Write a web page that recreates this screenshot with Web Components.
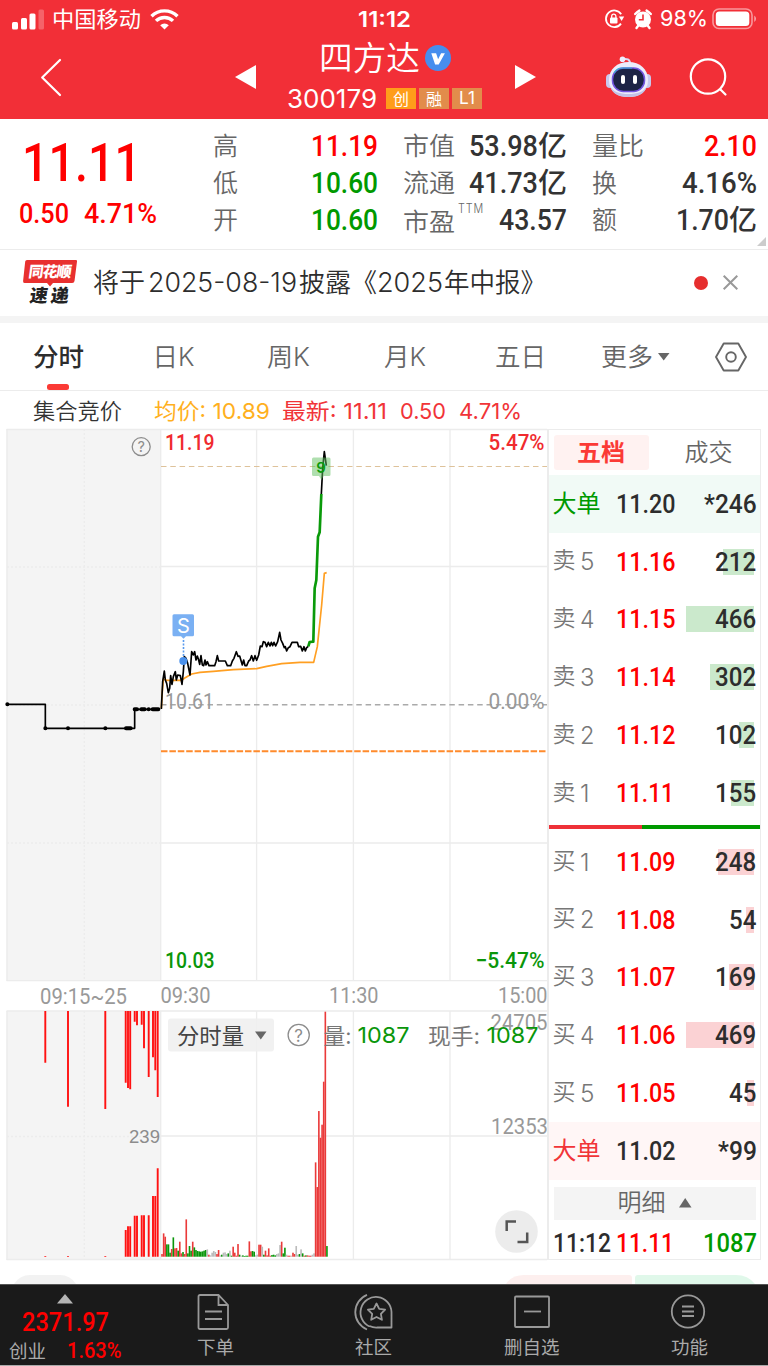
<!DOCTYPE html>
<html lang="zh-CN">
<head>
<meta charset="utf-8">
<title>四方达 300179</title>
<style>
  * {
    margin: 0;
    padding: 0;
    box-sizing: border-box;
  }
  body {
    width: 768px;
    height: 1366px;
    overflow: hidden;
    background: #fff;
    color: #333;
    font-family: Inter, "Noto Sans CJK SC", sans-serif;
  }
</style>
</head>
<body>
<stock-app></stock-app>

<script>
// reset shared by every shadow root
const base = `
      :host, * {
        box-sizing: border-box;
      }
      svg {
        overflow: visible;
      }`;

// Text squeezed or stretched to a given width: <fit-text w="60" size="24">
class FitText extends HTMLElement {
  constructor() {
    super();
    this.attachShadow({ mode: "open" });
  }

  connectedCallback() {
    const w = parseFloat(this.getAttribute("w"));
    const size = parseFloat(this.getAttribute("size"));
    this.shadowRoot.innerHTML = `
    <style>
      :host {
        display: block;
        flex: none;
        width: ${w}px;
        height: ${size}px;
        font-size: ${size}px;
        line-height: ${size}px;
        white-space: nowrap;
      }
      :host([num]) {
        font-family: Roboto, "Noto Sans CJK SC", sans-serif;
        font-weight: 500;
      }
      span {
        display: inline-block;
        transform-origin: 0 50%;
      }
    </style>
    <span><slot></slot></span>`;
    const span = this.shadowRoot.querySelector("span");
    const natural = span.getBoundingClientRect().width;
    if (natural) span.style.transform = `scaleX(${w / natural})`;
  }
}
customElements.define("fit-text", FitText);

class StatusBar extends HTMLElement {
  constructor() {
    super();
    this.attachShadow({ mode: "open" }).innerHTML = `
    <style>${base}
      :host {
        display: grid;
        grid-template-columns: 1fr auto 1fr;
        align-items: center;
        height: 38px;
        padding: 0 11px 0 12px;
        color: #fff;
      }
      .side { display: flex; align-items: center; }
      .end { justify-content: flex-end; }
      svg { display: block; flex: none; }
    </style>
    <div class="side">
      <svg width="32" height="21" viewBox="0 0 32 21" fill="#fff">
        <rect x="0" y="13" width="6" height="7.5" rx="1.5"/>
        <rect x="9" y="9" width="6" height="11.500" rx="1.5"/>
        <rect x="17.500" y="4.500" width="6" height="16" rx="1.5"/>
        <rect x="26.500" y="0.500" width="5.500" height="20" rx="1.5" opacity=".25"/>
      </svg>
      <fit-text w="89" size="22" style="margin-left:8px">中国移动</fit-text>
      <svg width="29" height="22" viewBox="0 0 29 22" fill="none" stroke="#fff" stroke-width="3.400" style="margin-left:8.500px">
        <path d="M1.500 8.200a18.500 18.500 0 0 1 26 0"/>
        <path d="M6 12.900a12.200 12.200 0 0 1 17 0"/>
        <path d="M10.200 17.200a6.200 6.200 0 0 1 8.600 0L14.500 21.500z" fill="#fff" stroke="none"/>
      </svg>
    </div>
    <fit-text w="53" size="21" style="font-weight:600">11:12</fit-text>
    <div class="side end">
      <svg width="21" height="20" viewBox="0 0 21 20" fill="none" stroke="#fff" stroke-width="1.800">
        <path d="M17.200 5.200A8.300 8.300 0 1 0 17 14.600"/>
        <path d="M14.800 7.500h5.400L17.600 12z" fill="#fff" stroke="none"/>
        <rect x="6" y="8.500" width="7.500" height="6" rx="1" fill="#fff" stroke="none"/>
        <path d="M7.700 9V7.200a2.100 2.100 0 0 1 4.200 0V9" stroke-width="1.300"/>
      </svg>
      <svg width="18" height="20" viewBox="0 0 18 20" style="margin-left:9px">
        <circle cx="9" cy="10.500" r="8" fill="#fff"/>
        <path d="M1.200 5a16 16 0 0 1 4.200-3.400M16.800 5a16 16 0 0 0-4.200-3.400M4 17l-1.500 2M14 17l1.500 2" stroke="#fff" stroke-width="2.400" stroke-linecap="round"/>
        <path d="M9 5.500v5.300H4.800" fill="none" stroke="#f22f37" stroke-width="1.600"/>
      </svg>
      <fit-text w="48" size="21.500" style="margin:0 4px 0 8.500px">98%</fit-text>
      <svg width="45" height="22" viewBox="0 0 45 22">
        <rect x="1" y="1" width="39" height="19.500" rx="6" fill="none" stroke="#fff" stroke-opacity=".5" stroke-width="1.600"/>
        <rect x="3.800" y="3.600" width="33.500" height="14.300" rx="3.500" fill="#fff"/>
        <path d="M42.300 7.500a4 4 0 0 1 0 6.500z" fill="#fff" fill-opacity=".6"/>
      </svg>
    </div>`;
  }
}
customElements.define("status-bar", StatusBar);

class StockHeader extends HTMLElement {
  constructor() {
    super();
    this.attachShadow({ mode: "open" }).innerHTML = `
    <style>${base}
      :host {
        display: block;
        height: 119px;
        background: #f22f37;
        color: #fff;
      }
      nav {
        display: grid;
        grid-template-columns: 235px 21px 259px 21px 70px 45px 39px 1fr;
        align-items: center;
        height: 81px;
      }
      svg { display: block; }
      .title {
        display: grid;
        grid-template-rows: 40px 41px;
        justify-items: center;
        padding-right: 2px;
      }
      .line { display: flex; align-items: center; }
      .tag {
        display: flex;
        align-items: center;
        justify-content: center;
        width: 30px;
        height: 21px;
        margin-left: 3.400px;
        background: #e28c4b;
      }
      .tag.gold { margin-left: 9px; background: #ff9d1a; }
      .up { margin-top: -4px; }
    </style>
    <status-bar></status-bar>
    <nav>
      <svg class="up" width="22" height="38" viewBox="0 0 22 38" style="margin-left:40px" fill="none" stroke="#fff" stroke-width="2.200" stroke-linecap="round" stroke-linejoin="round"><path d="M20 2 2.200 19.500 20 37"/></svg>
      <svg class="up" width="21" height="24" fill="#fff"><path d="M0 12 21 0v24z"/></svg>
      <div class="title">
        <div class="line">
          <fit-text w="101" size="33" style="font-weight:350">四方达</fit-text>
          <svg width="26" height="26" viewBox="0 0 26 26" style="margin-left:5px">
            <circle cx="13" cy="13" r="13" fill="#468eee"/>
            <path d="M6.300 8.200h4.800l2 6 3-6h3.800l-6.200 11.300h-3.600z" fill="#fff"/>
          </svg>
        </div>
        <div class="line">
          <fit-text w="90" size="25.500">300179</fit-text>
          <div class="tag gold"><fit-text w="16" size="16">创</fit-text></div>
          <div class="tag"><fit-text w="16" size="16">融</fit-text></div>
          <div class="tag"><fit-text w="16" size="17">L1</fit-text></div>
        </div>
      </div>
      <svg class="up" width="21" height="24" fill="#fff"><path d="M21 12 0 0v24z"/></svg>
      <i></i>
      <svg class="up" width="45" height="42" viewBox="0 0 45 42">
        <path d="M16 3.500c5-1.500 8 0 8 4" fill="none" stroke="#dcdcf6" stroke-width="2"/>
        <circle cx="16.500" cy="3.200" r="2.800" fill="#eef"/>
        <rect x="0" y="18" width="8" height="14" rx="4" fill="#c9c9ee"/>
        <rect x="37" y="18" width="8" height="14" rx="4" fill="#c9c9ee"/>
        <path d="M22.500 6C34 6 42 13 42 24S34 41 22.500 41 3 35 3 24 11 6 22.500 6z" fill="#ececfb"/>
        <path d="M22.500 38C31 38 38 36 41 30 39 38 32 41 22.500 41S6 38 4 30c3 6 10 8 18.500 8z" fill="#c3c3e6"/>
        <rect x="6.500" y="12" width="32" height="23.500" rx="11" fill="#1d2446" stroke="#7355e0" stroke-width="1.500"/>
        <path d="M8 17c2-4 5-5 9-5h9" fill="none" stroke="#37b6cf" stroke-width="1.200"/>
        <rect x="15" y="19" width="4" height="9" rx="2" fill="#fff"/>
        <rect x="27" y="19" width="4" height="9" rx="2" fill="#fff"/>
      </svg>
      <svg class="up" width="40" height="40" viewBox="0 0 40 40" style="margin-left:38.500px" fill="none" stroke="#fff" stroke-width="2.200" stroke-linecap="round"><circle cx="18" cy="19.500" r="17.200"/><path d="M30.500 32.500 35.500 37.500"/></svg>
    </nav>`;
  }
}
customElements.define("stock-header", StockHeader);

class StatItem extends HTMLElement {
  constructor() {
    super();
    this.attachShadow({ mode: "open" }).innerHTML = `
    <style>${base}
      :host {
        display: flex;
        align-items: center;
        justify-content: space-between;
        height: 37px;
        color: #333;
      }
      .label { display: flex; align-items: center; color: #666; font-weight: 350; }
      .value { display: flex; align-items: center; }
    </style>
    <div class="label"><slot name="label"></slot></div>
    <div class="value"><slot></slot></div>`;
  }
}
customElements.define("stat-item", StatItem);

class StockQuote extends HTMLElement {
  constructor() {
    super();
    this.attachShadow({ mode: "open" }).innerHTML = `
    <style>${base}
      :host {
        display: grid;
        grid-template-columns: 194px 544px 1fr;
        height: 131px;
        padding: 8.500px 0 0 19px;
        border-bottom: 1.500px solid #ececec;
      }
      .price { color: #f00; padding-top: 8.500px; }
      .change { display: flex; gap: 15px; margin-top: 10px; }
      .stats {
        display: grid;
        grid-template-columns: repeat(3, 164.500px);
        grid-template-rows: repeat(3, 37px);
        grid-auto-flow: column;
        column-gap: 25px;
      }
      .red { color: #f00; }
      .green { color: #090; }
      .yi { font-weight: 500; }
      svg { align-self: end; margin: 0 0 3px auto; padding-right: 4px; width: 13px; height: 9px; }
    </style>
    <div class="price">
      <fit-text num w="119" size="54" style="margin-left:3px">11.11</fit-text>
      <div class="change">
        <fit-text num w="50" size="28">0.50</fit-text>
        <fit-text num w="73" size="28">4.71%</fit-text>
      </div>
    </div>
    <div class="stats">
      <stat-item><fit-text slot="label" w="25" size="25">高</fit-text><fit-text num class="red" w="67" size="29">11.19</fit-text></stat-item>
      <stat-item><fit-text slot="label" w="25" size="25">低</fit-text><fit-text num class="green" w="67" size="29">10.60</fit-text></stat-item>
      <stat-item><fit-text slot="label" w="25" size="25">开</fit-text><fit-text num class="green" w="67" size="29">10.60</fit-text></stat-item>
      <stat-item><fit-text slot="label" w="52" size="25.500">市值</fit-text><fit-text num w="69" size="29">53.98</fit-text><fit-text class="yi" w="29" size="28">亿</fit-text></stat-item>
      <stat-item><fit-text slot="label" w="52" size="25.500">流通</fit-text><fit-text num w="69" size="29">41.73</fit-text><fit-text class="yi" w="29" size="28">亿</fit-text></stat-item>
      <stat-item><fit-text slot="label" w="52" size="25.500" style="margin-top:4px">市盈</fit-text><fit-text slot="label" w="26" size="12.500" style="margin:-21px 0 0 3.500px;letter-spacing:1px">TTM</fit-text><fit-text num w="68" size="29">43.57</fit-text></stat-item>
      <stat-item><fit-text slot="label" w="52" size="25.500">量比</fit-text><fit-text num class="red" w="53" size="29">2.10</fit-text></stat-item>
      <stat-item><fit-text slot="label" w="25" size="25">换</fit-text><fit-text num w="75" size="29">4.16%</fit-text></stat-item>
      <stat-item><fit-text slot="label" w="25" size="25">额</fit-text><fit-text num w="53" size="29">1.70</fit-text><fit-text class="yi" w="28" size="28">亿</fit-text></stat-item>
    </div>
    <svg viewBox="0 0 9 9" fill="#ccc"><path d="M9 0v9H0z"/></svg>`;
  }
}
customElements.define("stock-quote", StockQuote);

class NewsBanner extends HTMLElement {
  constructor() {
    super();
    this.attachShadow({ mode: "open" }).innerHTML = `
    <style>${base}
      :host {
        display: flex;
        align-items: center;
        height: 73px;
        padding: 0 30px 1px 23px;
        border-bottom: 7px solid #f4f4f4;
        color: #2d2d2d;
        font-weight: 350;
      }
      .logo { flex: none; margin-right: 15.500px; }
      .logo text { font-family: "Noto Sans CJK SC", sans-serif; font-weight: 900; }
      .right { display: flex; align-items: center; gap: 15px; margin-left: auto; }
      .dot { width: 14px; height: 14px; border-radius: 50%; background: #e62e2e; }
    </style>
    <svg class="logo" width="54" height="45" viewBox="0 0 54 45">
      <path d="M4 0h49q1.500 0 1 1.500L51.500 21q-.3 2-2.300 2H30l-3 3.500-3-3.500H1.500Q-.2 23 .1 21L2.200 1.500Q2.400 0 4 0z" fill="#e8302f"/>
      <g transform="skewX(-8)">
        <text x="7.500" y="17" font-size="15" fill="#fff" textLength="43">同花顺</text>
        <text x="12" y="42" font-size="18" fill="#222" textLength="39">速递</text>
      </g>
    </svg>
    <fit-text w="52" size="26">将于</fit-text>
    <fit-text w="149" size="26.500" style="margin:0 2px 0 3px">2025-08-19</fit-text>
    <fit-text w="78" size="26">披露《</fit-text>
    <fit-text w="66" size="26.500" style="margin-right:1px">2025</fit-text>
    <fit-text w="102" size="26">年中报》</fit-text>
    <div class="right">
      <div class="dot"></div>
      <svg width="15" height="15" viewBox="0 0 15 15" stroke="#999" stroke-width="2"><path d="M.7.7l13.600 13.600M14.300.7.7 14.300"/></svg>
    </div>`;
  }
}
customElements.define("news-banner", NewsBanner);

class ChartTabs extends HTMLElement {
  constructor() {
    super();
    this.attachShadow({ mode: "open" }).innerHTML = `
    <style>${base}
      :host {
        display: grid;
        grid-template-columns: 120px 114px 117.500px 111px 106px 113.500px 1fr;
        align-items: center;
        height: 68px;
        padding-left: 32.500px;
        border-bottom: 1px solid #ececec;
        color: #666;
        font-weight: 350;
      }
      .active {
        align-self: stretch;
        display: grid;
        grid-template-rows: 60px 6px;
        align-items: center;
        padding-top: 1px;
        color: #2d2d2d;
        font-weight: 500;
      }
      .active fit-text { margin-top: 6px; }
      .bar { width: 22px; height: 5.500px; margin-left: 14px; border-radius: 2.500px; background: #fb3a35; }
      .more { display: flex; align-items: center; gap: 5px; }
    </style>
    <div class="active"><fit-text w="51" size="25.500">分时</fit-text><div class="bar"></div></div>
    <fit-text w="42" size="25.500">日K</fit-text>
    <fit-text w="43" size="25.500">周K</fit-text>
    <fit-text w="42" size="25.500">月K</fit-text>
    <fit-text w="51" size="25.500">五日</fit-text>
    <div class="more"><fit-text w="52" size="25.500">更多</fit-text><svg width="12" height="8" fill="#666"><path d="M0 0h11.500L5.700 7.500z"/></svg></div>
    <svg width="32" height="30" viewBox="0 0 32 30" fill="none" stroke="#666" stroke-width="1.900" stroke-linejoin="round"><path d="M8.700 1.500h14.600L31 15l-7.700 13.500H8.700L1 15z"/><circle cx="16" cy="15" r="4.800"/></svg>`;
  }
}
customElements.define("chart-tabs", ChartTabs);

class ChartLegend extends HTMLElement {
  constructor() {
    super();
    this.attachShadow({ mode: "open" }).innerHTML = `
    <style>${base}
      :host {
        display: flex;
        align-items: center;
        height: 38px;
        padding: 1px 0 0 32.500px;
        color: #f13438;
      }
    </style>
    <fit-text w="89" size="22" style="color:#333;margin-right:32px;font-weight:350">集合竞价</fit-text>
    <fit-text w="116" size="22" style="color:#ffb01e;margin-right:12px">均价: 10.89</fit-text>
    <fit-text w="105" size="22" style="margin-right:13px">最新: 11.11</fit-text>
    <fit-text w="46" size="22" style="margin-right:13px">0.50</fit-text>
    <fit-text w="63" size="22">4.71%</fit-text>`;
  }
}
customElements.define("chart-legend", ChartLegend);

// call auction: [x, end of the upper bar, start of the lower bar]
const auction = [
  [45.3, 1062.700, 1256], [68, 1106.700, 1256], [105.3, 1109, 1256],
  [125.700, 1082.700, 1230], [128, 1088, 1226.300], [130.200, 1089.300, 1226.300],
  [134.700, 1021.700, 1215.700], [137, 1025.300, 1215.700], [141.700, 1024.700, 1215.300],
  [144, 1048.300, 1215.300], [148.700, 1077, 1215.300], [153, 1057.300, 1196],
  [155.300, 1070.300, 1196], [157.700, 1097, 1168.300]
];

// minute volumes: colour letter and height in thirds of a pixel
const volumes = (
  "r8 r70 r60 g37 g37 g12 r23 g58 r25 r26 g18 r45 r10 g14 r8 r112 g10 g32 g18 r45 " +
  "g28 g20 g17 g16 g15 g16 g18 g20 x22 r6 x4 x12 x17 x14 r8 r20 x4 g6 x12 x13 " +
  "x8 g10 x18 g3 r30 r12 r3 r38 g6 x3 g4 g2 g3 g3 r46 r16 g17 g15 x4 x6 " +
  "r36 r36 x30 g6 r18 r4 r25 r3 g5 g6 g4 x8 x10 x35 r45 g10 g27 x6 r3 r3 " +
  "x3 r12 r8 x32 x6 g8 x22 g10 r3 g4 r4 r3 r3 x6 x10 r283 r209 r437 r357 r396 " +
  "r525 r735 g32"
).split(" ");

class MinuteChart extends HTMLElement {
  constructor() {
    super();
    this.attachShadow({ mode: "open" });
    this.render();
  }

  auctionBars() {
    return auction.map(([x, top, low]) =>
      `<path d="M${x} 1011V${top}M${x} ${low}V1256.700"/>`).join("");
  }

  volumeBars() {
    const colors = { r: "#ea3a3a", g: "#0a960a", x: "#bbb" };
    return volumes.map((v, i) => {
      const h = parseInt(v.slice(1)) / 3;
      return `<rect x="${(161.200 + i * 1.617).toFixed(2)}" y="${(1256.700 - h).toFixed(2)}" width="1.620" height="${h.toFixed(2)}" fill="${colors[v[0]]}"/>`;
    }).join("");
  }

  label(x, y, w, text, color = "#999") {
    return `<text class="num" x="${x}" y="${y}" font-size="22" font-weight="${color === "#999" ? 400 : 500}" textLength="${w}" lengthAdjust="spacingAndGlyphs" fill="${color}">${text}</text>`;
  }

  word(x, y, w, text, color) {
    return `<text x="${x}" y="${y}" font-size="22" textLength="${w}" lengthAdjust="spacingAndGlyphs" fill="${color}">${text}</text>`;
  }

  render() {
    this.shadowRoot.innerHTML = `
    <style>${base}
      :host { display: block; width: 547px; height: 855px; }
      svg { display: block; font-family: Inter, "Noto Sans CJK SC", sans-serif; }
      .num { font-family: Roboto, sans-serif; }
    </style>
    <svg width="547" height="855" viewBox="0 429 547 855">
      <rect x="6.500" y="429" width="154" height="552" fill="#f4f4f4"/>
      <rect x="6.500" y="1011" width="154" height="248.500" fill="#f4f4f4"/>
      <g stroke="#ececec" stroke-width="1.300" fill="none">
        <path d="M6.500 429.500H547M6.500 980.700H547M6.500 1011H547M6.500 1259.500H547"/>
        <path d="M7 429V981M7 1011V1260M160.700 429V981M160.700 1011V1260M256.600 429V981M256.600 1011V1260M353.400 429V981M353.400 1011V1260M450 429V981M450 1011V1260"/>
        <path d="M161 566.500H547M161 843H547M161 1136H547"/>
        <path d="M84.300 429V981M84.300 1011V1260M7 567H160M7 705H160M7 843H160M7 1136.500H160" stroke-dasharray="2 2"/>
      </g>
      <path d="M161 466.500H547" stroke="#dec29a" stroke-width="1.200" stroke-dasharray="5.500 3.800"/>
      <path d="M161 704.700H547" stroke="#aaa" stroke-width="1.400" stroke-dasharray="5.500 3.800"/>
      <path d="M161 751.200H547" stroke="#ff8b2c" stroke-width="2" stroke-dasharray="6.500 1.900"/>

      ${this.label(165, 449.500, 49.500, "11.19", "#f02a2e")}
      ${this.label(488.500, 449.500, 56, "5.47%", "#f02a2e")}
      ${this.label(165, 708.500, 49, "10.61")}
      ${this.label(488.500, 708.500, 56, "0.00%")}
      ${this.label(165, 967.500, 49.500, "10.03", "#0a960a")}
      ${this.label(475.500, 967.500, 69, "−5.47%", "#0a960a")}
      ${this.label(40, 1004, 87, "09:15~25")}
      ${this.label(160.500, 1002.500, 50, "09:30")}
      ${this.label(329, 1002.500, 49.500, "11:30")}
      ${this.label(498, 1002.500, 49.500, "15:00")}
      ${this.label(490.500, 1029.500, 57, "24705")}
      ${this.label(491, 1133.700, 57, "12353")}

      <g stroke="#f11" stroke-width="1.900">${this.auctionBars()}</g>
      ${this.volumeBars()}
      <text x="129" y="1143" font-size="18.500" font-family="Liberation Sans" textLength="31" fill="#8c8c8c">239</text>

      <g transform="translate(0 425) scale(.33333)" fill="none" stroke-width="5" stroke-linejoin="round">
        <path stroke="#ff9f22" d="M484 850 487 800 490 762 500 766H545L553 760 575 747 600 742 640 739 700 734 770 731 800 724 845 716 900 712H941L952 665 965 540 973 445 980 443"/>
        <path stroke="#000" d="M22 838H136V910H404V853H478"/>
        <path stroke="#000" d="M484 852 488 770 493 738 496 765 500 775 505 803 509 790 512 752 516 778 520 755 526 740 529 765 533 750 541 752 546 778 550 740 553 695 558 700 563 715 570 750 575 680 580 690 584 680 588 705 592 693 596 705 599 718 603 692 607 720 611 722 615 705 618 720 622 710 627 722H644L648 710 652 692 656 708H676L682 722H692L697 708 702 700 709 680 714 694 719 693 727 720 731 705 735 722H740L746 708 750 705 755 692 760 708 765 692 770 706 776 690 781 663 786 665 790 650 795 652 800 665 805 652 810 663 814 652 818 662 822 652 827 663 833 650 839 622 843 645 848 655 853 668 856 665 860 678 865 668 870 665 876 652H892L896 665 902 664 907 678 912 665 916 678 920 668 925 664"/>
        <path stroke="#000" d="M964 207 968 130 973 80 979 122"/>
        <path stroke="#0a9a0a" stroke-width="8" d="M925 664 929 651 940 650 944 490 949 465 954 335 959 322 964 207"/>
        <path stroke="#000" stroke-width="12" stroke-linecap="round" d="M22 838h.1M136 910h.1M204 910h.1M316 910h.1M378 910H392M404 853H411M424 853H434M446 853h.1M458 853H475"/>
      </g>

      <path d="M174 614.200h18.500q1.500 0 1.500 1.500v19q0 1.500-1.500 1.500h-6.500l-2.500 2.500-2.500-2.500H174q-1.500 0-1.500-1.500v-19q0-1.500 1.500-1.500z" fill="#7ab0f3"/>
      <text x="183.300" y="632.500" font-size="20" text-anchor="middle" fill="#fff">S</text>
      <path d="M183.500 640V657" stroke="#5a9bee" stroke-width="1.600" stroke-dasharray="2 1.500"/>
      <circle cx="183.300" cy="661" r="4" fill="#4a91ec"/>
      <path d="M313.500 457.500h15.500q1.500 0 1.500 1.500v15.500q0 1.500-1.500 1.500h-5.500l-2 4-2.500-4h-5.500q-1.500 0-1.500-1.500V459q0-1.500 1.500-1.500z" fill="#5fbf5f" fill-opacity=".5"/>
      <text x="321" y="473" font-size="15" font-weight="600" text-anchor="middle" fill="#0a9a0a">9</text>

      <g fill="none" stroke="#8c8c8c" stroke-width="1.300">
        <circle cx="141.200" cy="446.700" r="9"/>
        <circle cx="298.700" cy="1035" r="10.600"/>
      </g>
      <text x="141.200" y="452" font-size="14.500" text-anchor="middle" fill="#8c8c8c">?</text>
      <text x="298.700" y="1041.500" font-size="17" text-anchor="middle" fill="#8c8c8c">?</text>

      <rect x="168" y="1018.500" width="106" height="33" rx="3" fill="#efefef" fill-opacity=".9"/>
      ${this.word(177, 1043.500, 67, "分时量", "#444")}
      <path d="M255 1031.500h11.500l-5.700 8z" fill="#666"/>
      ${this.word(323.500, 1043.500, 28, "量:", "#777")}
      ${this.word(357.500, 1043, 52, "1087", "#0a960a")}
      ${this.word(428, 1043.500, 52, "现手:", "#777")}
      ${this.word(486.500, 1043, 52, "1087", "#0a960a")}

      <circle cx="516.500" cy="1231.500" r="21.300" fill="#ececec"/>
      <path d="M506.700 1231V1221.500H516M527.200 1232.500V1242H517.500" fill="none" stroke="#555" stroke-width="2.500"/>

      <path d="M14 1284q6-9 16-9h30q10 0 16 9z" fill="#f2f2f2"/>
      <path d="M506 1284q6-9 18-9h23v9z" fill="#fdefee"/>
    </svg>`;
  }
}
customElements.define("minute-chart", MinuteChart);

class BookRow extends HTMLElement {
  constructor() {
    super();
    this.attachShadow({ mode: "open" });
  }

  connectedCallback() {
    const [side, level, price, qty, bar] = this.getAttribute("data").split(",");
    const big = side === "大单";
    const pw = price === "11.11" ? 58 : 59.500;
    this.shadowRoot.innerHTML = `
    <style>${base}
      :host {
        display: grid;
        grid-template-columns: 63px 62px 1fr;
        align-items: center;
        height: 57.800px;
        padding: 0 3px 0 3.500px;
      }
      .name { display: flex; gap: 4px; color: ${big ? level : "#777"}; font-weight: ${big ? 400 : 350}; }
      .price { color: ${big ? "#2d2d2d" : "#f00"}; }
      .qty { display: grid; align-items: center; justify-items: end; color: #2d2d2d; }
      .qty > * { grid-area: 1 / 1; }
      .bar {
        width: ${bar || 0}px;
        height: 26px;
        margin-right: 3px;
        background: ${side === "卖" ? "#cbe9cc" : "#fbd2d4"};
      }
    </style>
    <div class="name">${big
      ? `<fit-text w="48" size="24">大单</fit-text>`
      : `<fit-text w="23" size="23">${side}</fit-text><fit-text w="${level === "1" ? 9.500 : 14.500}" size="24.500">${level}</fit-text>`}</div>
    <fit-text num class="price" w="${pw}" size="26">${price}</fit-text>
    <div class="qty"><div class="bar"></div><fit-text num w="${qty.startsWith("*") ? qty.length * 13.800 - 2.500 : qty.length * 13.700}" size="26">${qty}</fit-text></div>`;
  }
}
customElements.define("book-row", BookRow);

class OrderBook extends HTMLElement {
  constructor() {
    super();
    this.attachShadow({ mode: "open" }).innerHTML = `
    <style>${base}
      :host { display: block; width: 213.500px; height: 855px; }
      .box {
        height: 831px;
        border: solid #ececec;
        border-width: 1px 1px 1.500px 2px;
      }
      .tabs { display: flex; align-items: center; height: 45px; padding-left: 4.500px; }
      .on {
        display: flex;
        align-items: center;
        justify-content: center;
        width: 95px;
        height: 35px;
        margin-right: 36px;
        border-radius: 3px;
        background: #fff2f1;
        color: #fb3a35;
        font-weight: 700;
      }
      .off { color: #666; font-weight: 350; }
      .split {
        height: 3.700px;
        margin: 3.200px 0 4.300px;
        background: linear-gradient(90deg, #ee3138 93px, #090 93px);
      }
      .ask { background: #f1faf6; }
      .bid { background: #fff6f6; }
      .detail {
        display: flex;
        align-items: center;
        justify-content: center;
        gap: 13px;
        height: 33px;
        margin: 7px 4px 0 4.500px;
        background: #f4f4f4;
        color: #666;
        font-weight: 350;
      }
      .last {
        display: flex;
        align-items: center;
        height: 46px;
        padding: 0 3px 0 3.500px;
        color: #f00;
      }
      svg { display: block; }
    </style>
    <div class="box">
      <div class="tabs">
        <div class="on"><fit-text w="48" size="24">五档</fit-text></div>
        <fit-text class="off" w="48" size="24">成交</fit-text>
      </div>
      <book-row class="ask" data="大单,#090,11.20,*246"></book-row>
      <book-row data="卖,5,11.16,212,31"></book-row>
      <book-row data="卖,4,11.15,466,68"></book-row>
      <book-row data="卖,3,11.14,302,44"></book-row>
      <book-row data="卖,2,11.12,102,15"></book-row>
      <book-row data="卖,1,11.11,155,23"></book-row>
      <div class="split"></div>
      <book-row data="买,1,11.09,248,36"></book-row>
      <book-row data="买,2,11.08,54,8"></book-row>
      <book-row data="买,3,11.07,169,24.500"></book-row>
      <book-row data="买,4,11.06,469,68"></book-row>
      <book-row data="买,5,11.05,45,7"></book-row>
      <book-row class="bid" data="大单,#f13438,11.02,*99"></book-row>
      <div class="detail">
        <fit-text w="48" size="24">明细</fit-text>
        <svg width="13" height="10" fill="#666"><path d="M0 9.500h12.500L6.200 0z"/></svg>
      </div>
      <div class="last">
        <fit-text num w="58" size="26" style="color:#2d2d2d">11:12</fit-text>
        <fit-text num w="58" size="26" style="margin-left:5px">11.11</fit-text>
        <fit-text num w="54" size="26" style="margin-left:auto;color:#090">1087</fit-text>
      </div>
    </div>
    <svg width="213" height="24" viewBox="547 1260 213 24"><path d="M547 1275h82q3 0 3 3v6h-85z" fill="#fdefee"/><path d="M638 1275h98q12 0 19 9H635v-6q0-3 3-3z" fill="#e0f8ea"/></svg>`;
  }
}
customElements.define("order-book", OrderBook);

class NavItem extends HTMLElement {
  constructor() {
    super();
    this.attachShadow({ mode: "open" }).innerHTML = `
    <style>${base}
      :host {
        display: flex;
        flex-direction: column;
        align-items: center;
        padding-top: 8px;
      }
      .icon { height: 45px; }
    </style>
    <div class="icon"><slot name="icon"></slot></div>
    <slot></slot>`;
  }
}
customElements.define("nav-item", NavItem);

class BottomNav extends HTMLElement {
  constructor() {
    super();
    this.attachShadow({ mode: "open" }).innerHTML = `
    <style>${base}
      :host {
        display: grid;
        grid-template-columns: 136px 158px 159px 157px 158px;
        height: 82px;
        border-top: 1px solid #555;
        border-bottom: 1px solid #aaa;
        background: #1a1a1a;
        color: #aaa;
      }
      .index { color: #f00; }
      .tri { display: block; margin: 8.500px 0 0 57px; }
      .sub { display: flex; align-items: center; gap: 21px; margin: 5.500px 0 0 9px; }
      nav-item svg { display: block; fill: none; stroke: #999; stroke-width: 1.800; }
    </style>
    <div class="index">
      <svg class="tri" width="16" height="10" fill="#b5b5b5"><path d="M0 9.500h16L8 0z"/></svg>
      <fit-text num w="87" size="26" style="margin:5px 0 0 22px">2371.97</fit-text>
      <div class="sub">
        <fit-text w="37" size="18.500" style="color:#aaa">创业</fit-text>
        <fit-text num w="54.500" size="22">1.63%</fit-text>
      </div>
    </div>
    <nav-item>
      <svg slot="icon" width="36" height="38" viewBox="0 0 36 38"><path d="M1.500 3.500q0-1.500 1.500-1.500h18.500L31 12v22.500q0 1.500-1.500 1.500H3q-1.500 0-1.500-1.500zM21.500 2v10H31M8 18.500h17M8 26h17"/></svg>
      <fit-text w="37" size="18.500">下单</fit-text>
    </nav-item>
    <nav-item>
      <svg slot="icon" width="40" height="38" viewBox="0 0 40 38"><path d="M13 1.800A18.700 18.700 0 0 0 13 36.500M15.500 33.500A15.500 15.500 0 1 1 37.500 19V34.500H23.500a15.500 15.500 0 0 1-8-1.500M22.500 10.500l2.700 5.300 5.900.9-4.200 4.200 1 5.900-5.400-2.800-5.300 2.800 1-5.900-4.300-4.200 5.900-.9z" stroke-linejoin="round"/></svg>
      <fit-text w="37" size="18.500">社区</fit-text>
    </nav-item>
    <nav-item>
      <svg slot="icon" width="36" height="38" viewBox="0 0 36 38"><rect x="1" y="3.500" width="34" height="30.500" rx="1"/><path d="M10 18.500h17"/></svg>
      <fit-text w="55.500" size="18.500">删自选</fit-text>
    </nav-item>
    <nav-item>
      <svg slot="icon" width="36" height="38" viewBox="0 0 36 38"><circle cx="17" cy="18.500" r="16.200"/><path d="M11 13.500h12M11 18.500h12M11 23h12"/></svg>
      <fit-text w="37" size="18.500">功能</fit-text>
    </nav-item>`;
  }
}
customElements.define("bottom-nav", BottomNav);

class StockApp extends HTMLElement {
  constructor() {
    super();
    this.attachShadow({ mode: "open" }).innerHTML = `
    <style>${base}
      :host {
        display: block;
        width: 768px;
        height: 1366px;
        overflow: hidden;
      }
      main { display: flex; height: 855px; }
    </style>
    <stock-header></stock-header>
    <stock-quote></stock-quote>
    <news-banner></news-banner>
    <chart-tabs></chart-tabs>
    <chart-legend></chart-legend>
    <main>
      <minute-chart></minute-chart>
      <order-book></order-book>
    </main>
    <bottom-nav></bottom-nav>`;
  }
}
customElements.define("stock-app", StockApp);
</script>
</body>
</html>
